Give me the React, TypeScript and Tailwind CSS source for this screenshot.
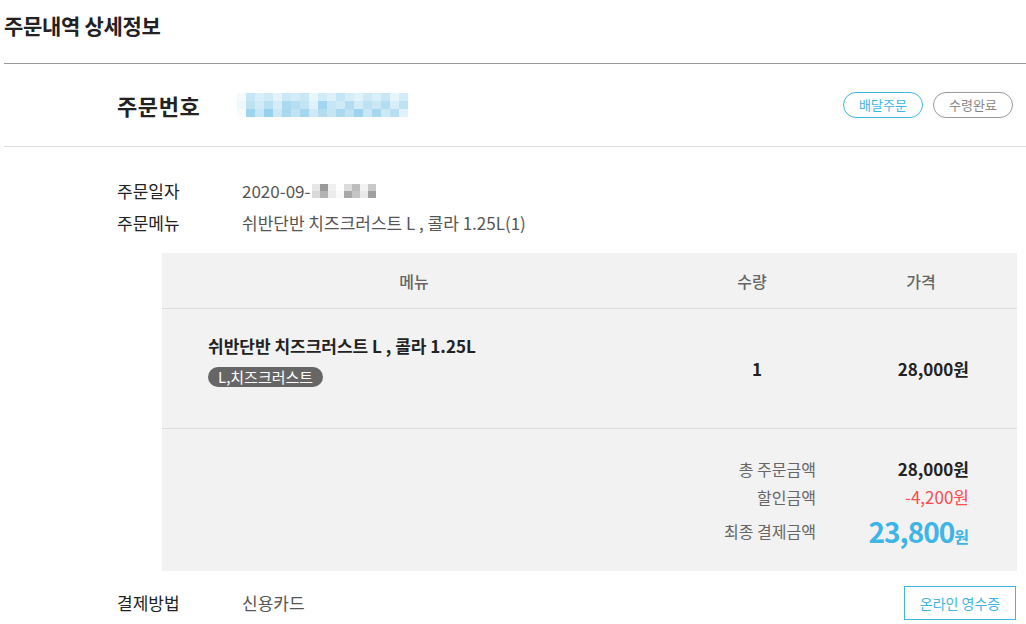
import React from "react";

const orderBlur = [
  ["bg-[#f4fafd]", "bg-[#c6e6f5]", "bg-[#d8eef8]", "bg-[#cfeaf6]", "bg-[#e4f3fa]", "bg-[#cae8f6]", "bg-[#d4ecf7]", "bg-[#c9e7f5]", "bg-[#e8f5fb]", "bg-[#d1ebf7]", "bg-[#dcf0f9]", "bg-[#c4e5f4]", "bg-[#d6edf8]", "bg-[#e0f2fa]", "bg-[#cde9f6]", "bg-[#d9eff9]", "bg-[#c8e7f5]", "bg-[#e6f4fb]", "bg-[#d3ecf7]"],
  ["bg-[#eef8fc]", "bg-[#bfe2f3]", "bg-[#d0eaf7]", "bg-[#b8dff2]", "bg-[#d6edf8]", "bg-[#aad9f0]", "bg-[#b6def2]", "bg-[#c2e4f4]", "bg-[#dff1fa]", "bg-[#a2d5ef]", "bg-[#c6e6f5]", "bg-[#cfeaf6]", "bg-[#b1dcf1]", "bg-[#d2ebf7]", "bg-[#bde1f3]", "bg-[#c9e7f5]", "bg-[#b4ddf1]", "bg-[#d8eef8]", "bg-[#c0e3f4]"],
  ["bg-[#f6fbfd]", "bg-[#9fd4ee]", "bg-[#c5e6f5]", "bg-[#98d1ed]", "bg-[#cae8f6]", "bg-[#a9d8f0]", "bg-[#c0e3f4]", "bg-[#a4d6ef]", "bg-[#cfe9f6]", "bg-[#b3dcf1]", "bg-[#c3e5f4]", "bg-[#aad9f0]", "bg-[#bee2f3]", "bg-[#9ed3ee]", "bg-[#c7e7f5]", "bg-[#a7d7ef]", "bg-[#cbe8f6]", "bg-[#b7def2]", "bg-[#e2f2fa]"],
];

const dateBlur = [
  ["bg-[#e6e6e6]", "bg-[#9a9a9a]", "bg-[#f0f0f0]", "bg-[#ffffff]", "bg-[#dcdcdc]", "bg-[#bdbdbd]", "bg-[#f2f2f2]", "bg-[#c8c8c8]"],
  ["bg-[#d9d9d9]", "bg-[#b3b3b3]", "bg-[#ececec]", "bg-[#fafafa]", "bg-[#a8a8a8]", "bg-[#c4c4c4]", "bg-[#e9e9e9]", "bg-[#a0a0a0]"],
];

export default function App() {
  return (
    <div
      className="h-[624px] w-[1026px] overflow-hidden bg-white pl-[4px] text-[#222]"
      style={{ fontFamily: '"Noto Sans CJK KR", "Noto Sans", sans-serif' }}
    >
      {/* page title */}
      <div className="h-[63px] pt-[11px]">
        <h1 className="text-[21px] font-bold leading-[28px] tracking-[-0.3px]">주문내역 상세정보</h1>
      </div>

      {/* order number */}
      <div className="flex h-[84px] items-center border-y border-t-[#999] border-b-[#ddd] pl-[113px] pr-[13px]">
        <span className="w-[120px] text-[22px] font-bold leading-[30px] tracking-[0.6px]">주문번호</span>
        <div className="flex flex-col">
          {orderBlur.map((row, i) => (
            <div key={i} className="flex">
              {row.map((c, j) => (
                <div key={j} className={`h-[8px] w-[9px] ${c}`} />
              ))}
            </div>
          ))}
        </div>
        <div className="ml-auto flex gap-[10px]">
          <span className="flex h-[26px] w-[80px] items-center justify-center rounded-full border border-[#3db5e6] text-[13px] text-[#3db5e6]">
            배달주문
          </span>
          <span className="flex h-[26px] w-[80px] items-center justify-center rounded-full border border-[#999] text-[13px] text-[#888]">
            수령완료
          </span>
        </div>
      </div>

      {/* info rows */}
      <div className="pl-[113px] pt-[28px] text-[17px] leading-[32px]">
        <div className="flex">
          <span className="w-[125px] text-[#222]">주문일자</span>
          <span className="flex items-center text-[#555]">
            2020-09-
            <span className="ml-[2px] flex flex-col">
              {dateBlur.map((row, i) => (
                <span key={i} className="flex">
                  {row.map((c, j) => (
                    <span key={j} className={`h-[7px] w-[8px] ${c}`} />
                  ))}
                </span>
              ))}
            </span>
          </span>
        </div>
        <div className="flex">
          <span className="w-[125px] text-[#222]">주문메뉴</span>
          <span className="text-[#555]">쉬반단반 치즈크러스트 L , 콜라 1.25L(1)</span>
        </div>
      </div>

      {/* table */}
      <div className="ml-[158px] mr-[9px] mt-[14px] bg-[#f2f2f2]">
        <div className="grid h-[56px] grid-cols-[504px_172px_166px] items-center border-b border-[#ddd] text-center text-[16px] font-medium text-[#666]">
          <span>메뉴</span>
          <span>수량</span>
          <span>가격</span>
        </div>
        <div className="grid h-[120px] grid-cols-[504px_172px_166px] items-center border-b border-[#ddd]">
          <div className="pb-[16px] pl-[46px]">
            <p className="text-[17px] font-bold leading-[24px]">쉬반단반 치즈크러스트 L , 콜라 1.25L</p>
            <span className="mt-[9px] inline-block rounded-full bg-[#666] px-[10px] text-[15px] leading-[20px] text-white">
              L,치즈크러스트
            </span>
          </div>
          <span className="pl-[10px] text-center text-[17px] font-bold">1</span>
          <span className="pr-[35px] text-right text-[17px] font-bold">28,000원</span>
        </div>
        <div className="h-[142px] pr-[48px] pt-[26px] text-[16px]">
          <div className="flex h-[28px] items-center justify-end">
            <span className="text-[#666]">총 주문금액</span>
            <span className="w-[153px] text-right text-[17px] font-bold text-[#222]">28,000원</span>
          </div>
          <div className="flex h-[28px] items-center justify-end">
            <span className="text-[#666]">할인금액</span>
            <span className="w-[153px] text-right text-[17px] text-[#ff4b4b]">-4,200원</span>
          </div>
          <div className="flex h-[40px] items-center justify-end">
            <span className="text-[#666]">최종 결제금액</span>
            <span className="w-[153px] text-right font-bold text-[#3db5e6]">
              <span className="text-[28px] tracking-[-1px]">23,800</span>
              <span className="text-[16px]">원</span>
            </span>
          </div>
        </div>
      </div>

      {/* payment */}
      <div className="mt-[15px] flex items-center pl-[113px] pr-[10px] text-[17px]">
        <span className="w-[125px] text-[#222]">결제방법</span>
        <span className="text-[#555]">신용카드</span>
        <button className="ml-auto h-[34px] w-[112px] border border-[#3db5e6] text-[14px] text-[#3db5e6]">
          온라인 영수증
        </button>
      </div>
    </div>
  );
}
